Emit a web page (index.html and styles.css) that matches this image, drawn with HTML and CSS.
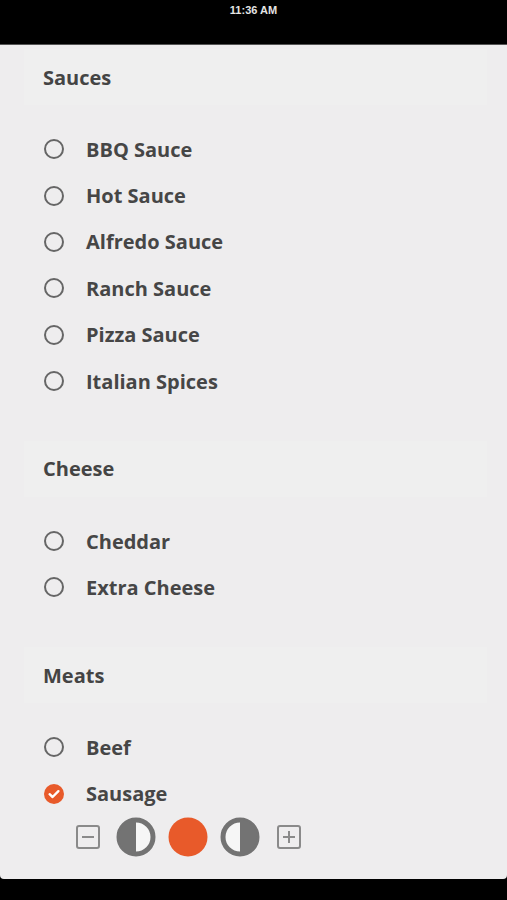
FILE: index.html
```html
<!DOCTYPE html>
<html lang="en">
<head>
    <meta charset="UTF-8">
    <meta name="viewport" content="width=device-width, initial-scale=1.0">
    <title>Toppings</title>
    <link rel="stylesheet" href="styles.css">
</head>
<body>
    <div class="status-bar">11:36 AM</div>

    <div class="screen">
        <div class="section">
            <div class="section-title">Sauces</div>
            <div class="option-list">
                <div class="option"><span class="radio"></span>BBQ Sauce</div>
                <div class="option"><span class="radio"></span>Hot Sauce</div>
                <div class="option"><span class="radio"></span>Alfredo Sauce</div>
                <div class="option"><span class="radio"></span>Ranch Sauce</div>
                <div class="option"><span class="radio"></span>Pizza Sauce</div>
                <div class="option"><span class="radio"></span>Italian Spices</div>
            </div>
        </div>

        <div class="section">
            <div class="section-title">Cheese</div>
            <div class="option-list">
                <div class="option"><span class="radio"></span>Cheddar</div>
                <div class="option"><span class="radio"></span>Extra Cheese</div>
            </div>
        </div>

        <div class="section">
            <div class="section-title">Meats</div>
            <div class="option-list">
                <div class="option"><span class="radio"></span>Beef</div>
                <div class="option">
                    <span class="radio checked">
                        <svg width="20" height="20" viewBox="0 0 20 20">
                            <circle cx="10" cy="10" r="10" fill="#e85a2a"/>
                            <path d="M5.6 10.2 L8.6 13 L14.4 7.2" fill="none" stroke="#fff" stroke-width="2.4" stroke-linecap="round" stroke-linejoin="round"/>
                        </svg>
                    </span>
                    Sausage
                </div>
                <!-- portion picker -->
                <div class="portion">
                    <svg class="step minus" width="24" height="24" viewBox="0 0 24 24">
                        <rect x="1" y="1" width="22" height="22" rx="2" fill="none" stroke="#8a8a8a" stroke-width="2"/>
                        <path d="M6 12 H18" stroke="#8a8a8a" stroke-width="2"/>
                    </svg>
                    <svg class="half" width="40" height="40" viewBox="0 0 40 40">
                        <circle cx="20" cy="20" r="17" fill="#f6f6f6" stroke="#737373" stroke-width="5"/>
                        <path d="M20 3 A17 17 0 0 0 20 37 Z" fill="#737373"/>
                    </svg>
                    <svg class="whole" width="40" height="40" viewBox="0 0 40 40">
                        <circle cx="20" cy="20" r="19.5" fill="#e85a2a"/>
                    </svg>
                    <svg class="half" width="40" height="40" viewBox="0 0 40 40">
                        <circle cx="20" cy="20" r="17" fill="#f6f6f6" stroke="#737373" stroke-width="5"/>
                        <path d="M20 3 A17 17 0 0 1 20 37 Z" fill="#737373"/>
                    </svg>
                    <svg class="step plus" width="24" height="24" viewBox="0 0 24 24">
                        <rect x="1" y="1" width="22" height="22" rx="2" fill="none" stroke="#8a8a8a" stroke-width="2"/>
                        <path d="M6 12 H18 M12 6 V18" stroke="#8a8a8a" stroke-width="2"/>
                    </svg>
                </div>
            </div>
        </div>
    </div>
</body>
</html>
```

FILE: styles.css
```css
body {
    margin: 0;
    background-color: #000;
    font-family: 'Open Sans', 'Noto Sans', sans-serif;
    height: 900px;
    overflow: hidden;
}
.status-bar {
    height: 45px;
    box-sizing: border-box;
    padding-top: 4px;
    text-align: center;
    color: #e4e4e4;
    font-family: 'Liberation Sans', Arial, sans-serif;
    font-size: 11px;
    font-weight: bold;
    border-bottom: 1px solid #555;
}
.screen {
    height: 834px;
    background-color: #eeedee;
    border-radius: 0 0 4px 4px;
    padding-top: 4px;
    box-sizing: border-box;
    overflow: hidden;
}
.section {
    margin-bottom: 36.5px;
}
.section-title {
    height: 56px;
    margin: 0 20px 0 24px;
    padding-left: 19px;
    display: flex;
    align-items: center;
    background-color: #efefef;
    color: #444;
    font-size: 20px;
    font-weight: bold;
}
.option-list {
    padding-top: 21px;
}
.option {
    height: 46.4px;
    display: flex;
    align-items: center;
    gap: 22px;
    padding-left: 44px;
    color: #464646;
    font-size: 20px;
    font-weight: bold;
}
.radio {
    width: 20px;
    height: 20px;
    box-sizing: border-box;
    border: 2px solid #666;
    border-radius: 50%;
    flex-shrink: 0;
}
.radio.checked {
    border: none;
    display: flex;
}
.portion {
    display: flex;
    align-items: center;
    padding-left: 76px;
    height: 40px;
}
.portion .minus {
    margin-right: 16px;
}
.portion .whole {
    margin: 0 12px;
}
.portion .plus {
    margin-left: 17px;
}
```
